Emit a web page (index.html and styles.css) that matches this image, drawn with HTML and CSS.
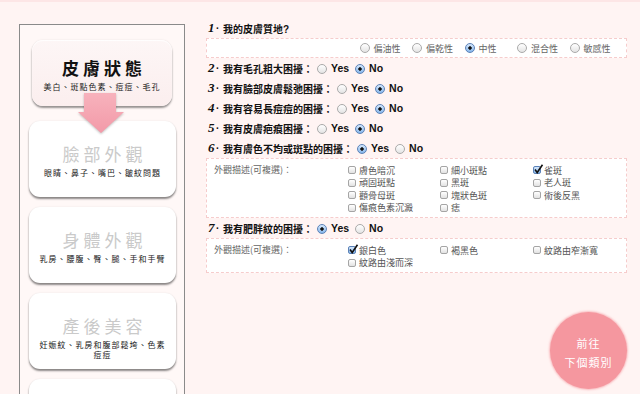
FILE: index.html
```html
<!DOCTYPE html>
<html lang="zh-Hant">
<head>
<meta charset="utf-8">
<title>皮膚狀態</title>
<link rel="stylesheet" href="styles.css">
</head>
<body>
<div class="topline"></div>
<div class="page">
  <aside class="sidebar">
    <div class="card active">
      <div class="card-title">皮膚狀態</div>
      <div class="card-sub">美白、斑點色素、痘痘、毛孔</div>
      <svg class="arrow" width="48" height="42" viewBox="0 0 48 42">
        <defs>
          <linearGradient id="ag" x1="0" y1="0" x2="0" y2="1">
            <stop offset="0" stop-color="#f7b2bc"/>
            <stop offset="1" stop-color="#f39aa8"/>
          </linearGradient>
        </defs>
        <polygon points="7,0 39,0 39,19 47,19 24,40 1,19 7,19" fill="url(#ag)"/>
      </svg>
    </div>
    <div class="card">
      <div class="card-title">臉部外觀</div>
      <div class="card-sub">眼睛、鼻子、嘴巴、皺紋問題</div>
    </div>
    <div class="card">
      <div class="card-title">身體外觀</div>
      <div class="card-sub">乳房、腰腹、臀、腿、手和手臂</div>
    </div>
    <div class="card">
      <div class="card-title">產後美容</div>
      <div class="card-sub">妊娠紋、乳房和腹部鬆垮、色素<br>痘痘</div>
    </div>
    <div class="card"></div>
  </aside>

  <main class="content">
    <div class="q"><span class="num">1</span><span class="sep">·</span>我的皮膚質地?</div>
    <div class="box opts">
      <span class="opt"><span class="radio"></span>偏油性</span>
      <span class="opt"><span class="radio"></span>偏乾性</span>
      <span class="opt"><span class="radio on"></span>中性</span>
      <span class="opt"><span class="radio"></span>混合性</span>
      <span class="opt"><span class="radio"></span>敏感性</span>
    </div>

    <div class="q"><span class="num">2</span><span class="sep">·</span>我有毛孔粗大困擾：<span class="radio"></span><span class="yn">Yes</span><span class="radio on"></span><span class="yn">No</span></div>
    <div class="q"><span class="num">3</span><span class="sep">·</span>我有臉部皮膚鬆弛困擾：<span class="radio"></span><span class="yn">Yes</span><span class="radio on"></span><span class="yn">No</span></div>
    <div class="q"><span class="num">4</span><span class="sep">·</span>我有容易長痘痘的困擾：<span class="radio"></span><span class="yn">Yes</span><span class="radio on"></span><span class="yn">No</span></div>
    <div class="q"><span class="num">5</span><span class="sep">·</span>我有皮膚疤痕困擾：<span class="radio"></span><span class="yn">Yes</span><span class="radio on"></span><span class="yn">No</span></div>
    <div class="q"><span class="num">6</span><span class="sep">·</span>我有膚色不均或斑點的困擾：<span class="radio on"></span><span class="yn">Yes</span><span class="radio"></span><span class="yn">No</span></div>
    <div class="box detail">
      <div class="label">外觀描述(可複選)：</div>
      <div class="checks">
        <span class="chk"><span class="cb"></span>膚色暗沉</span>
        <span class="chk"><span class="cb"></span>細小斑點</span>
        <span class="chk"><span class="cb on"><svg width="11" height="11" viewBox="0 0 11 11"><path d="M2 5.5 L4.2 8.5 L9.5 0.8" fill="none" stroke="#111" stroke-width="1.6"/></svg></span>雀斑</span>
        <span class="chk"><span class="cb"></span>頑固斑點</span>
        <span class="chk"><span class="cb"></span>黑斑</span>
        <span class="chk"><span class="cb"></span>老人斑</span>
        <span class="chk"><span class="cb"></span>顴骨母斑</span>
        <span class="chk"><span class="cb"></span>塊狀色斑</span>
        <span class="chk"><span class="cb"></span>術後反黑</span>
        <span class="chk"><span class="cb"></span>傷痕色素沉澱</span>
        <span class="chk"><span class="cb"></span>痣</span>
      </div>
    </div>

    <div class="q"><span class="num">7</span><span class="sep">·</span>我有肥胖紋的困擾：<span class="radio on"></span><span class="yn">Yes</span><span class="radio"></span><span class="yn">No</span></div>
    <div class="box detail">
      <div class="label">外觀描述(可複選)：</div>
      <div class="checks">
        <span class="chk"><span class="cb on"><svg width="11" height="11" viewBox="0 0 11 11"><path d="M2 5.5 L4.2 8.5 L9.5 0.8" fill="none" stroke="#111" stroke-width="1.6"/></svg></span>銀白色</span>
        <span class="chk"><span class="cb"></span>褐黑色</span>
        <span class="chk"><span class="cb"></span>紋路由窄漸寬</span>
        <span class="chk"><span class="cb"></span>紋路由淺而深</span>
      </div>
    </div>
  </main>

  <a class="next" href="#">前往<br>下個類別</a>
</div>
</body>
</html>
```

FILE: styles.css
```css
html, body {
  margin: 0;
  padding: 0;
}
body {
  width: 640px;
  height: 394px;
  overflow: hidden;
  background: #fff4f3;
  font-family: "Liberation Sans", "Noto Sans CJK TC", sans-serif;
  position: relative;
}
.topline {
  height: 2px;
  background: #fde6e6;
}
.page {
  display: flex;
  align-items: flex-start;
}

/* sidebar */
.sidebar {
  margin: 22px 0 0 19px;
  width: 166px;
  height: 370px;
  border: 1px solid #8a8a8a;
  border-bottom: none;
  background: #fff8f7;
  padding: 15px 7px 0 9px;
  box-sizing: border-box;
  display: flex;
  flex-direction: column;
  gap: 10px;
  flex-shrink: 0;
  overflow: hidden;
}
.card {
  position: relative;
  width: 147px;
  height: 76px;
  flex-shrink: 0;
  box-sizing: border-box;
  border-radius: 11px;
  background: #fff;
  box-shadow: 0 2px 2px rgba(0,0,0,0.45), 0 0 2px rgba(0,0,0,0.08);
  text-align: center;
  padding: 24px 6px 0;
  font-family: "Noto Sans CJK TC", sans-serif;
}
.card.active {
  width: 140px;
  height: 66px;
  margin: 0 0 5px 3px;
  padding-top: 19px;
  background: linear-gradient(#fdf6f6, #fbeeee);
  box-shadow: 0 2px 2px rgba(0,0,0,0.4), inset 0 1px 1px rgba(255,255,255,0.9), 0 0 2px rgba(0,0,0,0.1);
}
.card-title {
  font-size: 17px;
  line-height: 18px;
  letter-spacing: 4px;
  padding-left: 4px;
  color: #cacaca;
}
.card.active .card-title {
  color: #111;
  font-weight: bold;
}
.card-sub {
  margin-top: 5px;
  font-size: 8px;
  line-height: 10px;
  letter-spacing: 1px;
  color: #222;
}
.card.active .card-sub {
  margin-top: 5px;
}
.arrow {
  position: absolute;
  left: 45px;
  top: 53px;
  z-index: 2;
  filter: drop-shadow(0 1px 1px rgba(0,0,0,0.25));
}

/* content */
.content {
  margin-left: 21px;
  width: 421px;
  padding-top: 16px;
  font-family: "Liberation Sans", "Noto Sans CJK TC", sans-serif;
}
.q {
  display: flex;
  align-items: center;
  height: 20px;
  padding-left: 2px;
  font-size: 10px;
  font-weight: bold;
  color: #111;
}
.num {
  font-family: "Liberation Serif", serif;
  font-style: italic;
  font-weight: bold;
  font-size: 13px;
  width: 8px;
}
.sep {
  width: 7px;
  font-size: 10px;
}
.yn {
  margin: 0 6px 0 4px;
  font-size: 10.5px;
}
.q .radio {
  margin-left: 4px;
}
.q .yn + .radio {
  margin-left: 0;
}
.radio {
  display: inline-block;
  width: 10px;
  height: 10px;
  border-radius: 50%;
  box-sizing: border-box;
  border: 1px solid #a9a9a9;
  background: linear-gradient(#ffffff, #e4e4e4);
  flex-shrink: 0;
  margin-top: 2px;
}
.radio.on {
  border-color: #5b82b8;
  background: radial-gradient(circle, #111 0, #111 1.4px, transparent 2px), linear-gradient(#d6e8fc, #86b6ea);
}

.box {
  background: #fff;
  border: 1px dashed #f6cccc;
  box-sizing: border-box;
}
.opts {
  height: 20px;
  display: flex;
  justify-content: flex-end;
  align-items: center;
  padding-right: 4px;
  font-family: "Noto Sans CJK TC", sans-serif;
  font-size: 9px;
  color: #666;
}
.opt {
  width: 52.5px;
  display: flex;
  align-items: center;
  gap: 4px;
}
.opt .radio {
  margin-top: 0;
}

.detail {
  display: flex;
  padding: 5px 0 3px 7px;
  font-family: "Noto Sans CJK TC", sans-serif;
  font-size: 9px;
  color: #666;
}
.label {
  width: 134px;
  line-height: 12.5px;
  flex-shrink: 0;
}
.checks {
  display: grid;
  grid-template-columns: 92px 93px 92px;
  grid-auto-rows: 12.5px;
}
.chk {
  display: flex;
  align-items: center;
  gap: 3px;
  color: #555;
}
.cb {
  position: relative;
  display: inline-block;
  width: 8px;
  height: 8px;
  box-sizing: border-box;
  border: 1px solid #a5a5a5;
  border-radius: 2px;
  background: linear-gradient(#fff, #e2e2e2);
  flex-shrink: 0;
}
.cb.on {
  border-color: #5b82b8;
  background: linear-gradient(#d6e8fc, #86b6ea);
}
.cb svg {
  position: absolute;
  left: -1px;
  top: -3px;
}

/* next button */
.next {
  position: absolute;
  left: 550px;
  top: 312px;
  width: 77px;
  height: 77px;
  border-radius: 50%;
  background: #f5979f;
  box-shadow: 0 0 2px 1px rgba(245,151,159,0.6);
  color: #fff;
  text-decoration: none;
  font-family: "Noto Sans CJK TC", sans-serif;
  font-size: 11px;
  line-height: 19px;
  letter-spacing: 1px;
  text-align: center;
  display: flex;
  align-items: center;
  justify-content: center;
  padding-top: 4px;
  box-sizing: border-box;
}
```
